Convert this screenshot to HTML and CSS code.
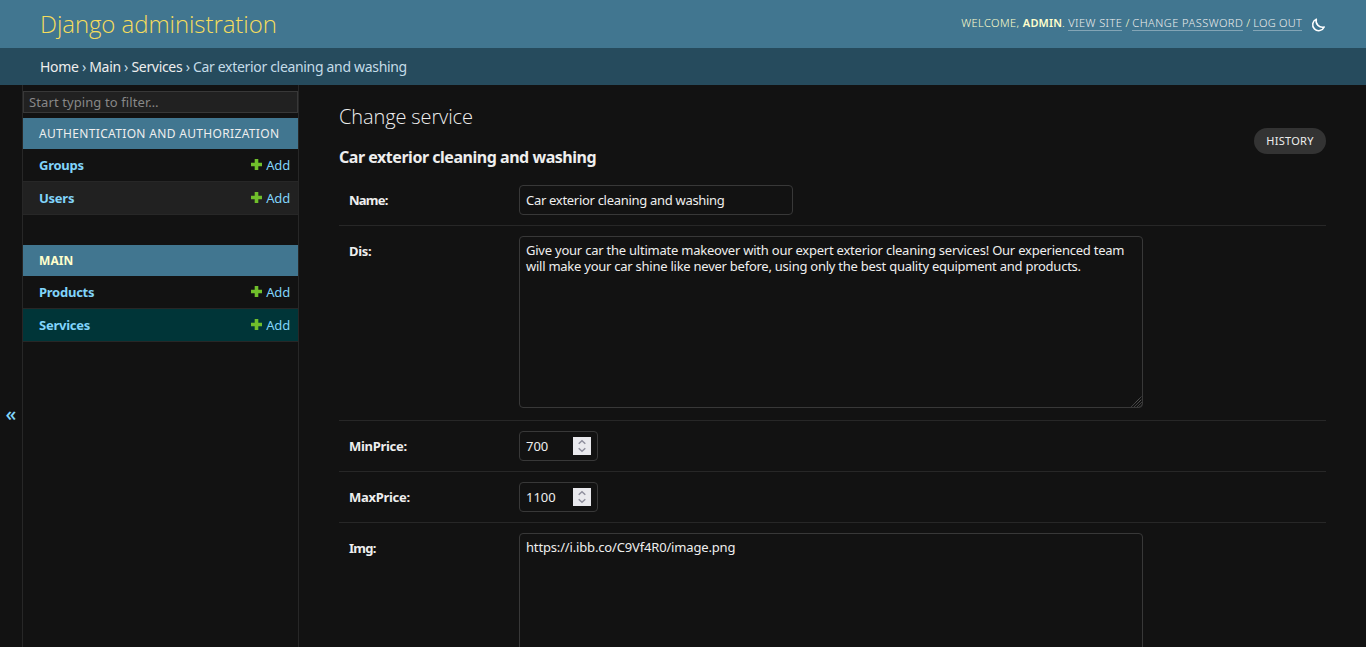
FILE: index.html
```html
<!DOCTYPE html>
<html lang="en">
<head>
<meta charset="utf-8">
<title>Change service | Django administration</title>
<link rel="stylesheet" href="styles.css">
</head>
<body>
<svg width="0" height="0" class="defs"><defs>
<symbol id="plus" viewBox="0 0 11 11"><path d="M3.700 0h3.600v3.700H11v3.600H7.300V11H3.700V7.300H0V3.700h3.700z" fill="#70bf2b"/></symbol>
<symbol id="spin" viewBox="0 0 18 18"><path d="M5.700 6.800 9 3.800l3.300 3M5.700 11.200l3.300 3 3.300-3" fill="none" stroke="#8f8f9d" stroke-width="1.500"/></symbol>
</defs></svg>
<header class="header">
  <div class="brand">Django administration</div>
  <div class="user-tools">
    <span class="welcome">WELCOME, <strong>ADMIN</strong>.</span>
    <a class="t-view">VIEW SITE</a><i>/</i><a class="t-pass">CHANGE PASSWORD</a><i>/</i><a class="t-out">LOG OUT</a>
    <svg class="moon" viewBox="0 0 24 24" width="16" height="16"><path d="M9.500 3.200A9 9 0 1 0 21.300 15A9.600 9.600 0 0 1 9.500 3.200Z" fill="none" stroke="#fff" stroke-width="2.300" stroke-linejoin="round"/></svg>
  </div>
</header>
<nav class="breadcrumbs"><a>Home</a> › <a>Main</a> › <a>Services</a> › Car exterior cleaning and washing</nav>
<div class="main">
  <button class="toggle">«</button>
  <nav class="sidebar">
    <input class="filter" placeholder="Start typing to filter…">
    <section class="module">
      <h3 class="caption">AUTHENTICATION AND AUTHORIZATION</h3>
      <div class="item"><b>Groups</b><a class="add"><svg><use href="#plus"/></svg>Add</a></div>
      <div class="item alt"><b>Users</b><a class="add"><svg><use href="#plus"/></svg>Add</a></div>
    </section>
    <section class="module">
      <h3 class="caption current">MAIN</h3>
      <div class="item"><b>Products</b><a class="add"><svg><use href="#plus"/></svg>Add</a></div>
      <div class="item selected"><b>Services</b><a class="add"><svg><use href="#plus"/></svg>Add</a></div>
    </section>
  </nav>
  <main class="content">
    <div class="heading">
      <div><h1>Change service</h1><h2>Car exterior cleaning and washing</h2></div>
      <a class="history">HISTORY</a>
    </div>
    <div class="row"><label class="tight">Name:</label><input class="field name" value="Car exterior cleaning and washing"></div>
    <div class="row tall"><label>Dis:</label><div class="area"><span class="line1">Give your car the ultimate makeover with our expert exterior cleaning services! Our experienced team</span><br><span class="line2">will make your car shine like never before, using only the best quality equipment and products.</span><svg class="grip" viewBox="0 0 11 11"><path d="M.5 10.500l10-10M3.500 10.500l7-7M6.500 10.500l4-4M9 10.500l1.500-1.500" stroke="#777" stroke-width=".9" stroke-dasharray="1 .6"/></svg></div></div>
    <div class="row"><label>MinPrice:</label><div class="field number">700<svg><use href="#spin"/></svg></div></div>
    <div class="row"><label>MaxPrice:</label><div class="field number">1100<svg><use href="#spin"/></svg></div></div>
    <div class="row tall"><label class="tight">Img:</label><div class="area url">https://i.ibb.co/C9Vf4R0/image.png</div></div>
  </main>
</div>
</body>
</html>
```
FILE: styles.css
```css
* { box-sizing: border-box; }
body { margin: 0; height: 647px; overflow: hidden; display: flex; flex-direction: column; background: #121212; color: #eee; font: 13px/16px "Noto Sans", sans-serif; }
.defs { position: absolute; }
.header { flex: none; height: 48px; padding: 0 40px; display: flex; justify-content: space-between; align-items: center; background: #417690; }
.brand { font: 300 24px/48px "Open Sans", sans-serif; letter-spacing: -.07px; color: #f5dd5d; white-space: nowrap; }
.user-tools { display: flex; align-items: center; height: 46px; font-size: 11px; line-height: 14px; color: #ffc; white-space: nowrap; }
.user-tools .welcome { margin: 0 3px 2px 0; font-weight: 300; letter-spacing: .46px; }
.user-tools strong { font-weight: 600; letter-spacing: .15px; }
.user-tools a { margin-bottom: 1px; font-weight: 300; color: #eee; border-bottom: 1px solid rgba(255,255,255,.35); }
.user-tools .t-view { letter-spacing: .45px; }
.user-tools .t-pass { letter-spacing: .48px; }
.user-tools .t-out { letter-spacing: .26px; }
.user-tools i { font-style: normal; font-weight: 300; width: 10px; margin-bottom: 2px; text-align: center; }
.moon { margin: 1px 0 0 8px; }
.breadcrumbs { flex: none; height: 37px; padding-left: 40px; background: #264b5d; color: #c4dce8; font-size: 14px; line-height: 37px; letter-spacing: -.32px; white-space: pre; }
.breadcrumbs a { color: #eee; }
.main { flex: 1; min-height: 0; display: flex; }
.toggle { width: 23px; padding: 94px 0 0; border: 0; border-right: 1px solid #272727; background: #121212; color: #81d4fa; font: 500 20px "Noto Sans", sans-serif; }
.sidebar { width: 276px; border-right: 1px solid #272727; padding-top: 6px; }
.filter { display: block; width: 275px; height: 22px; margin-bottom: 5px; padding: 0 5px; border: 1px solid #383838; background: #212121; font: 13px "Noto Sans", sans-serif; letter-spacing: .1px; outline: 0; }
.filter::placeholder { color: #888; }
.module { margin-bottom: 30px; }
.caption { margin: 0; height: 31px; padding-left: 16px; background: #417690; color: #eee; font-size: 12px; font-weight: 400; line-height: 31px; letter-spacing: .33px; white-space: nowrap; }
.caption.current { color: #ffc; font-weight: 700; letter-spacing: .1px; }
.item { height: 33px; padding: 0 8px 0 16px; display: flex; justify-content: space-between; align-items: center; border-bottom: 1px solid #272727; color: #81d4fa; }
.item b { letter-spacing: -.25px; }
.item.alt { background: #212121; }
.item.selected { background: #003538; }
.add { display: flex; align-items: center; gap: 4px; letter-spacing: -.15px; }
.add svg { width: 11px; height: 11px; margin-top: -2px; }
.content { flex: 1; padding: 20px 40px 0; overflow: hidden; }
.heading { height: 70px; display: flex; justify-content: space-between; }
h1 { margin: 0; font: 300 20px/24px "Open Sans", sans-serif; letter-spacing: -.12px; color: #eee; }
h2 { margin: 16px 0 0; font-size: 16px; line-height: 24px; letter-spacing: -.47px; }
.history { margin-top: 23px; width: 72px; height: 26px; border-radius: 13px; background: #333; font-size: 11px; line-height: 26px; letter-spacing: .3px; text-align: center; }
.row { display: flex; align-items: flex-start; padding: 10px; border-bottom: 1px solid #272727; }
.row.tall { padding-bottom: 12px; }
label { width: 170px; font-weight: 700; line-height: 30px; letter-spacing: -.3px; }
label.tight { letter-spacing: -.75px; }
.field, .area { border: 1px solid #383838; border-radius: 4px; background: #121212; color: #eee; font: 13px/16px "Noto Sans", sans-serif; }
.name { width: 274px; height: 30px; padding: 0 6px; letter-spacing: -.3px; outline: 0; }
.area { position: relative; width: 624px; height: 172px; padding: 5px 6px; white-space: nowrap; }
.line1 { letter-spacing: -.228px; }
.line2 { letter-spacing: -.25px; }
.url { letter-spacing: -.16px; }
.grip { position: absolute; right: 0; bottom: 0; width: 11px; height: 11px; }
.number { width: 79px; height: 30px; padding: 0 6px; display: flex; align-items: center; justify-content: space-between; }
.number svg { width: 18px; height: 18px; background: #e9e9ed; }
```
